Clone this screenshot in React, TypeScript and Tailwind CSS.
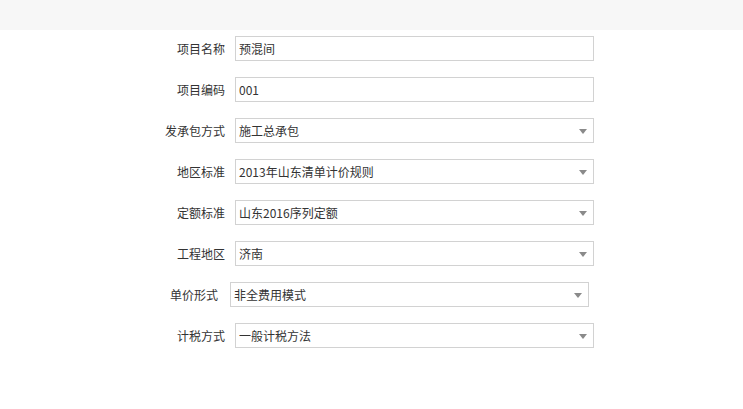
import React from "react";

type Row = { label: string; value: string; select: boolean; shifted?: boolean };

const rows: Row[] = [
  { label: "项目名称", value: "预混间", select: false },
  { label: "项目编码", value: "001", select: false },
  { label: "发承包方式", value: "施工总承包", select: true },
  { label: "地区标准", value: "2013年山东清单计价规则", select: true },
  { label: "定额标准", value: "山东2016序列定额", select: true },
  { label: "工程地区", value: "济南", select: true },
  { label: "单价形式", value: "非全费用模式", select: true, shifted: true },
  { label: "计税方式", value: "一般计税方法", select: true },
];

function Caret() {
  return (
    <svg width="8" height="5" viewBox="0 0 8 5" className="absolute right-[6px] top-[10px]">
      <path d="M0 0 L8 0 L4 5 Z" fill="#8a8a8a" />
    </svg>
  );
}

export default function App() {
  return (
    <div
      className="w-[743px] h-[409px] bg-white text-[12px] text-[#333]"
      style={{ fontFamily: '"Microsoft YaHei", "Noto Sans CJK SC", "Noto Sans", sans-serif' }}
    >
      <div className="h-[30px] bg-[#f7f7f7]" />
      <div className="flex flex-col gap-[16px] pt-[6px] pl-[155px]">
        {rows.map((r) => (
          <div
            key={r.label}
            className={
              r.shifted
                ? "flex items-center h-[25px] gap-[12px]"
                : "flex items-center h-[25px] gap-[10px]"
            }
          >
            <div className={r.shifted ? "w-[63px] text-right" : "w-[70px] text-right"}>{r.label}</div>
            <div className="relative w-[359px] h-[25px] border border-[#d2d2d2] bg-white flex items-center pl-[3px]">
              <span>{r.value}</span>
              {r.select && <Caret />}
            </div>
          </div>
        ))}
      </div>
    </div>
  );
}
